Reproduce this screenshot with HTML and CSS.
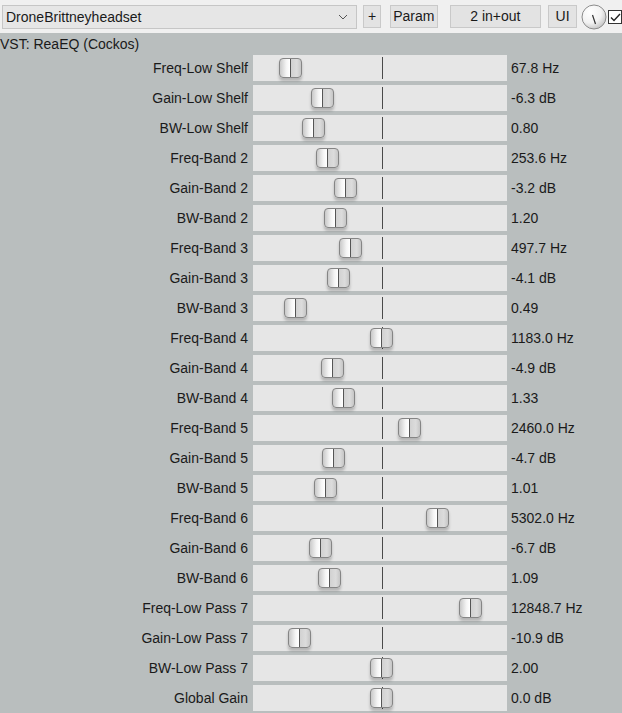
FILE: index.html
```html
<!DOCTYPE html>
<html lang="en">
<head>
  <meta charset="UTF-8" />
  <title>ReaEQ</title>
  <link rel="stylesheet" href="styles.css">
</head>
<body>

  <!-- Top toolbar -->
  <div class="toolbar">
    <div class="preset">
      <span>DroneBrittneyheadset</span>
      <svg class="chevron" width="10" height="6" viewBox="0 0 10 6">
        <path d="M1 1 L5 5 L9 1" fill="none" stroke="#555" stroke-width="1"/>
      </svg>
    </div>
    <div class="btn btn-plus">+</div>
    <div class="btn btn-param">Param</div>
    <div class="btn btn-io">2 in+out</div>
    <div class="btn btn-ui">UI</div>
    <svg class="knob" width="26" height="26" viewBox="0 0 26 26">
      <defs>
        <radialGradient id="kg" cx="35%" cy="30%" r="75%">
          <stop offset="0" stop-color="#ffffff"/>
          <stop offset="0.6" stop-color="#f2f2f2"/>
          <stop offset="1" stop-color="#c4c4c4"/>
        </radialGradient>
      </defs>
      <circle cx="13" cy="13" r="12" fill="url(#kg)" stroke="#8c8c8c" stroke-width="1"/>
      <path d="M11.5 11 L14.5 20" stroke="#333" stroke-width="1.2"/>
    </svg>
    <div class="check">
      <svg width="13" height="13" viewBox="0 0 13 13">
        <path d="M2 6.5 L5 9.5 L11 3" fill="none" stroke="#222" stroke-width="1.4"/>
      </svg>
    </div>
  </div>

  <div class="plugin">
    <div class="plugin-name">VST: ReaEQ (Cockos)</div>

    <div class="params">
      <div class="row"><span class="label">Freq-Low Shelf</span><div class="track"><i class="center"></i><b class="thumb" style="left:26px"></b></div><span class="value">67.8 Hz</span></div>
      <div class="row"><span class="label">Gain-Low Shelf</span><div class="track"><i class="center"></i><b class="thumb" style="left:58px"></b></div><span class="value">-6.3 dB</span></div>
      <div class="row"><span class="label">BW-Low Shelf</span><div class="track"><i class="center"></i><b class="thumb" style="left:49px"></b></div><span class="value">0.80</span></div>
      <div class="row"><span class="label">Freq-Band 2</span><div class="track"><i class="center"></i><b class="thumb" style="left:63px"></b></div><span class="value">253.6 Hz</span></div>
      <div class="row"><span class="label">Gain-Band 2</span><div class="track"><i class="center"></i><b class="thumb" style="left:81px"></b></div><span class="value">-3.2 dB</span></div>
      <div class="row"><span class="label">BW-Band 2</span><div class="track"><i class="center"></i><b class="thumb" style="left:71px"></b></div><span class="value">1.20</span></div>
      <div class="row"><span class="label">Freq-Band 3</span><div class="track"><i class="center"></i><b class="thumb" style="left:86px"></b></div><span class="value">497.7 Hz</span></div>
      <div class="row"><span class="label">Gain-Band 3</span><div class="track"><i class="center"></i><b class="thumb" style="left:74px"></b></div><span class="value">-4.1 dB</span></div>
      <div class="row"><span class="label">BW-Band 3</span><div class="track"><i class="center"></i><b class="thumb" style="left:31px"></b></div><span class="value">0.49</span></div>
      <div class="row"><span class="label">Freq-Band 4</span><div class="track"><i class="center"></i><b class="thumb" style="left:117px"></b></div><span class="value">1183.0 Hz</span></div>
      <div class="row"><span class="label">Gain-Band 4</span><div class="track"><i class="center"></i><b class="thumb" style="left:68px"></b></div><span class="value">-4.9 dB</span></div>
      <div class="row"><span class="label">BW-Band 4</span><div class="track"><i class="center"></i><b class="thumb" style="left:79px"></b></div><span class="value">1.33</span></div>
      <div class="row"><span class="label">Freq-Band 5</span><div class="track"><i class="center"></i><b class="thumb" style="left:145px"></b></div><span class="value">2460.0 Hz</span></div>
      <div class="row"><span class="label">Gain-Band 5</span><div class="track"><i class="center"></i><b class="thumb" style="left:69px"></b></div><span class="value">-4.7 dB</span></div>
      <div class="row"><span class="label">BW-Band 5</span><div class="track"><i class="center"></i><b class="thumb" style="left:61px"></b></div><span class="value">1.01</span></div>
      <div class="row"><span class="label">Freq-Band 6</span><div class="track"><i class="center"></i><b class="thumb" style="left:173px"></b></div><span class="value">5302.0 Hz</span></div>
      <div class="row"><span class="label">Gain-Band 6</span><div class="track"><i class="center"></i><b class="thumb" style="left:56px"></b></div><span class="value">-6.7 dB</span></div>
      <div class="row"><span class="label">BW-Band 6</span><div class="track"><i class="center"></i><b class="thumb" style="left:65px"></b></div><span class="value">1.09</span></div>
      <div class="row"><span class="label">Freq-Low Pass 7</span><div class="track"><i class="center"></i><b class="thumb" style="left:206px"></b></div><span class="value">12848.7 Hz</span></div>
      <div class="row"><span class="label">Gain-Low Pass 7</span><div class="track"><i class="center"></i><b class="thumb" style="left:35px"></b></div><span class="value">-10.9 dB</span></div>
      <div class="row"><span class="label">BW-Low Pass 7</span><div class="track"><i class="center"></i><b class="thumb" style="left:117px"></b></div><span class="value">2.00</span></div>
      <div class="row"><span class="label">Global Gain</span><div class="track"><i class="center"></i><b class="thumb" style="left:117px"></b></div><span class="value">0.0 dB</span></div>
    </div>
  </div>

</body>
</html>
```

FILE: styles.css
```css
/* Base */
body {
  margin: 0;
  font-family: "Liberation Sans", Arial, sans-serif;
  font-size: 14px;
  color: #1a1a1a;
  background: #b9bebe;
  overflow: hidden;
}

/* Toolbar across the top */
.toolbar {
  display: flex;
  align-items: center;
  height: 33px;
  padding-left: 2px;
  background: #f0f0f0;
  white-space: nowrap;
}
.preset {
  display: flex;
  align-items: center;
  justify-content: space-between;
  box-sizing: border-box;
  width: 357px;
  height: 24px;
  padding: 0 7px 0 3px;
  background: #e6e6e6;
  border: 1px solid #c6c6c6;
}
.chevron {
  margin-right: 1px;
}
.btn {
  box-sizing: border-box;
  height: 23px;
  line-height: 21px;
  text-align: center;
  background: #e3e3e3;
  border: 1px solid #c9c9c9;
}
.btn-plus  { width: 18px; margin-left: 6px; }
.btn-param { width: 48px; margin-left: 9px; }
.btn-io    { width: 92px; margin-left: 12px; }
.btn-ui    { width: 29px; margin-left: 7px; }
.knob {
  margin-left: 4px;
  flex: none;
}
.check {
  flex: none;
  box-sizing: border-box;
  width: 14px;
  height: 14px;
  margin-left: 1px;
  background: #fff;
  border: 1px solid #333;
  line-height: 0;
}

/* Plugin panel */
.plugin-name {
  height: 20px;
  line-height: 22px;
}
.params {
  display: flex;
  flex-direction: column;
}
.row {
  display: grid;
  grid-template-columns: 253px 254px 1fr;
  align-items: center;
  height: 30px;
}
.label {
  text-align: right;
  padding-right: 5px;
}
.value {
  padding-left: 4px;
}

/* Slider */
.track {
  position: relative;
  height: 26px;
  background: #e6e6e6;
}
.center {
  position: absolute;
  left: 129px;
  top: 2px;
  bottom: 2px;
  width: 1px;
  background: #4a4a4a;
}
.thumb {
  position: absolute;
  top: 3px;
  box-sizing: border-box;
  width: 23px;
  height: 20px;
  border: 1px solid #858585;
  border-radius: 4px;
  background: linear-gradient(to right,
    #c9c9c9 0%, #f4f4f4 30%, #ffffff 46%,
    #555 48%, #555 52%,
    #d2d2d2 54%, #dcdcdc 80%, #c6c6c6 100%);
  box-shadow: 0 3px 3px rgba(0, 0, 0, 0.22);
}
```
